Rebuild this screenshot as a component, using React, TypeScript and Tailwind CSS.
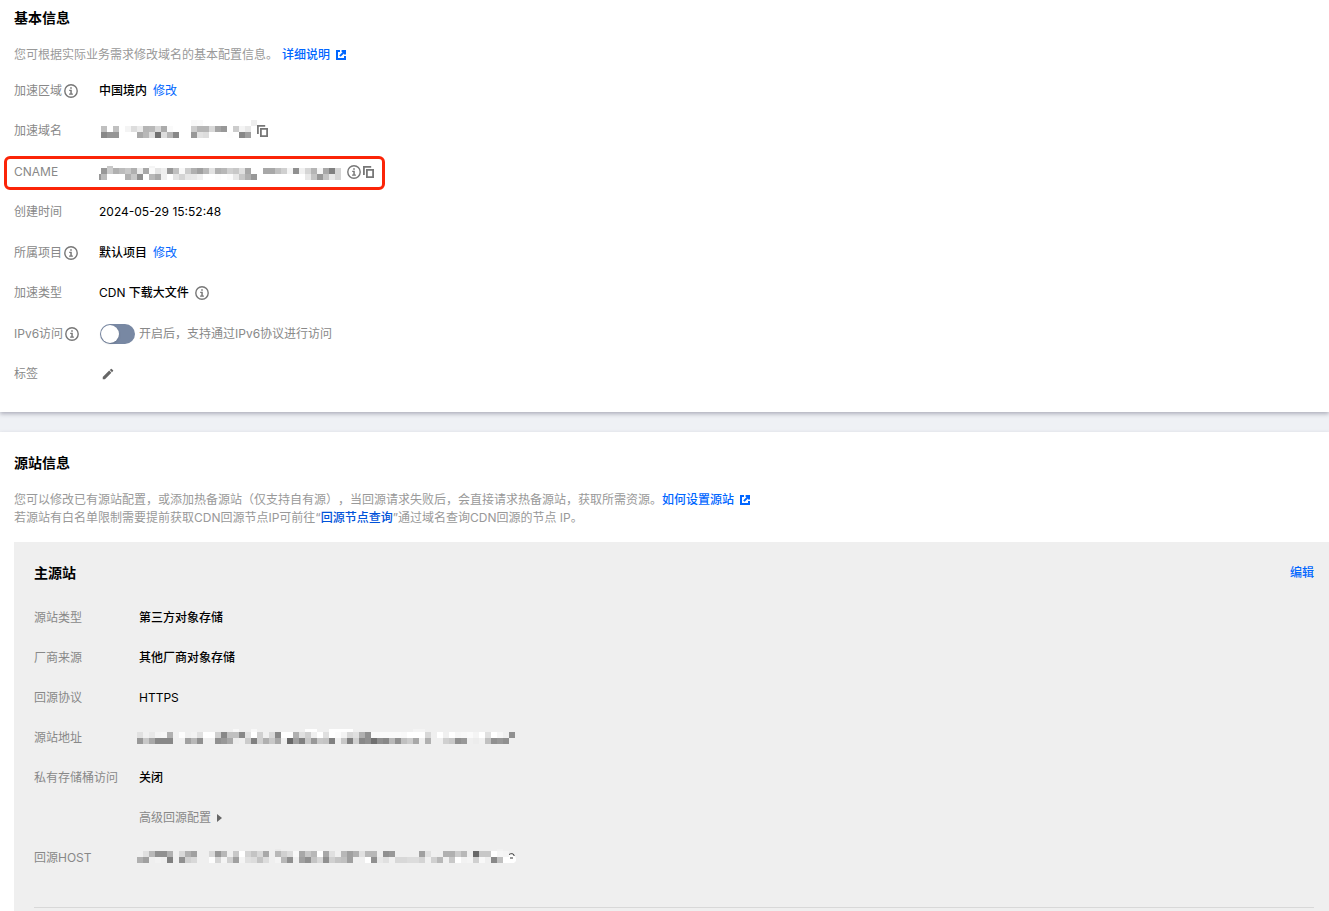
import type { ReactNode } from 'react';
import { MdEdit } from 'react-icons/md';

// Masked values: every pair of characters is one grey cell, ".." is an empty one
const DOMAIN_MASK = [
  '..............................f8fa................ee',
  'c0..c0..f4ddebb5b8d8abfa......ccb5b5d8a598..ccf4e8..',
  '889595......a8b8dd70ddb588....98e2dd......fd..88a0..',
];

const CNAME_MASK = [
  '....c8............f5..............................................................',
  '..98ccb0bcc8b0eca8fae4ee98c0f8ccb0a0b8e2b0b8d0c8e0a8....a8a8c0d0f590f0d5b5f5a880d5',
  '98bc......b0c890..b8a8f0..e4d4e6e8f0....fc..fbe8c8b098................e8c498c4e8d5',
];

const ORIGIN_MASK = [
  '................................f8....f8................ffff....ffffffff....................f4f4..............................',
  'e0f0e8f4f6b0f0fd..f2e0ffffd088c0c088e2ffd0f0d888ffffb0e0d0f0ffe0fffcf4d8e0b090fafafafafaf8ffffffd8..fff0fff6f8faf4ffe0fff6..90',
  '98c8a8888888....a0b890....9098a8ec..cc80d0b0c8a8f068a080c898c8c480..c880d08890709088b890c0cca8..b0....d0c89098..ecf0c0909890..',
];

const HOST_MASK = [
  '..............................................ea........................................................................f2..',
  'f0e0b89090b0..d8b0a0....d898b8..c8ffd4c4d8a8..b8d0dcf8a8c8b8ffa8e0f0b8a0b0e0b8b8..9098........a0e0f0..b0b0ccb8..68c8c8fff6f4',
  'b0a0..f2..80..90d0d8....fdd4f4d0a0f4e0dcc4dc..f4b890..a090c4d890d0c4c0a0f0..ff90e8e0f0d8d8dcdcd4f0d0b8f0c8fff2f4d0f8..88c0ff',
];

interface MosaicProps {
  rows: string[];
  label: string;
  clipX?: number;
  clipY?: number;
  className?: string;
}

function Mosaic({ rows, label, clipX = 0, clipY = 0, className = 'mb-1 shrink-0' }: MosaicProps) {
  const width = (rows[0].length / 2) * 6 - clipX;
  const height = rows.length * 6 - clipY;
  return (
    <svg
      role="img"
      aria-label={label}
      width={width}
      height={height}
      viewBox={`${clipX} ${clipY} ${width} ${height}`}
      shapeRendering="crispEdges"
      className={className}
    >
      {rows.map((row, y) =>
        (row.match(/../g) ?? []).map((cell, x) =>
          cell === '..' ? null : (
            <rect key={`${x}-${y}`} x={x * 6} y={y * 6} width="6" height="6" fill={`#${cell}${cell}${cell}`} />
          )
        )
      )}
    </svg>
  );
}

function InfoIcon() {
  return (
    <svg width="14" height="14" viewBox="0 0 14 14" fill="none" className="shrink-0 text-[#777777]">
      <circle cx="7" cy="7" r="6.2" stroke="currentColor" strokeWidth="1.4" />
      <path d="M6.2 3.2h1.6v1.5H6.2zM5.2 5.7h2.6v3.9h1.1v1.2H5.1V9.6h1.2V6.9H5.2z" fill="currentColor" />
    </svg>
  );
}

function ExternalIcon() {
  return (
    <svg width="10" height="10" viewBox="0 0 10 10" fill="none" stroke="currentColor" className="shrink-0">
      <path d="M4 1H1v8h8V6" strokeWidth="2" />
      <path d="M5.6 1H9v3.4M8.8 1.2 3.9 6.1" strokeWidth="2" />
    </svg>
  );
}

function CopyButton({ label }: { label: string }) {
  return (
    <button type="button" aria-label={label} className="shrink-0 text-[#777777]">
      <svg width="11" height="12" viewBox="0 0 11 12" fill="none" stroke="currentColor" strokeWidth="1.8" className="block">
        <path d="M.9 9V.9h7.3" />
        <path d="M3.9 3.9h6.2v7.2H3.9z" />
      </svg>
    </button>
  );
}

function InfoRow({ label, info, tall, children }: { label: string; info?: boolean; tall?: boolean; children: ReactNode }) {
  return (
    <div className={tall ? 'relative flex h-[41px] items-center' : 'relative flex h-10 items-center'}>
      <dt className="flex w-[85px] shrink-0 items-center gap-0.5 text-[#888888]">
        {label}
        {info && <InfoIcon />}
      </dt>
      <dd className="flex items-center">{children}</dd>
    </div>
  );
}

function OriginRow({ label, children }: { label?: string; children: ReactNode }) {
  return (
    <div className="flex h-10 items-center">
      <dt className="w-[103px] shrink-0 text-[#888888]">{label}</dt>
      <dd className="flex items-center">{children}</dd>
    </div>
  );
}

export default function App() {
  return (
    <div className="flex min-h-screen flex-col gap-5 bg-[#eff1f5] font-['Inter','Noto_Sans_CJK_SC',sans-serif] text-[12px] leading-[18px] text-black [text-spacing-trim:space-all]">
      {/* Basic information */}
      <section className="bg-white px-3.5 pt-2 pb-[18px] shadow-[0_2px_4px_rgba(54,54,80,0.34)]">
        <h2 className="text-[14px] leading-5 font-bold">基本信息</h2>
        <p className="mt-[18px] flex items-center text-[#999999]">
          您可根据实际业务需求修改域名的基本配置信息。
          <a href="#detail" className="ml-1 flex items-center gap-1.5 font-medium text-[#0066ff]">
            详细说明
            <ExternalIcon />
          </a>
        </p>

        <dl className="mt-1.5">
          <InfoRow label="加速区域" info tall>
            <span className="font-medium">中国境内</span>
            <button type="button" className="ml-1.5 text-[#0066ff]">修改</button>
          </InfoRow>
          <InfoRow label="加速域名">
            <span className="flex items-center pl-0.5">
              <Mosaic rows={DOMAIN_MASK} label="加速域名" />
              <CopyButton label="复制域名" />
            </span>
          </InfoRow>
          <InfoRow label="CNAME" tall>
            <Mosaic rows={CNAME_MASK} clipX={4} clipY={4} label="CNAME" className="mt-0.5 shrink-0" />
            <span className="ml-1.5 flex items-center gap-0.5">
              <InfoIcon />
              <CopyButton label="复制 CNAME" />
            </span>
            <span className="pointer-events-none absolute top-[5px] -left-2.5 h-[34px] w-[381px] rounded-md border-3 border-[#fb2407]" />
          </InfoRow>
          <InfoRow label="创建时间">
            <span>2024-05-29 15:52:48</span>
          </InfoRow>
          <InfoRow label="所属项目" info tall>
            <span className="font-medium">默认项目</span>
            <button type="button" className="ml-1.5 text-[#0066ff]">修改</button>
          </InfoRow>
          <InfoRow label="加速类型">
            <span className="mr-1.5">
              CDN <span className="font-medium">下载大文件</span>
            </span>
            <InfoIcon />
          </InfoRow>
          <InfoRow label="IPv6访问" info tall>
            <label className="flex items-center gap-1 text-[#888888]">
              <input
                type="checkbox"
                role="switch"
                className="ml-px h-5 w-[35px] appearance-none rounded-full bg-[#7888a3] before:m-px before:block before:size-[18px] before:rounded-full before:bg-white before:shadow-sm checked:bg-[#0066ff] checked:before:ml-4"
              />
              开启后，支持通过IPv6协议进行访问
            </label>
          </InfoRow>
          <InfoRow label="标签">
            <button type="button" aria-label="编辑标签" className="ml-0.5 text-[#666666]">
              <MdEdit className="size-3.5" />
            </button>
          </InfoRow>
        </dl>
      </section>

      {/* Origin information */}
      <section className="flex flex-1 flex-col bg-white pt-[21px] pl-3.5 shadow-[0_2px_4px_rgba(54,54,80,0.34)]">
        <h2 className="text-[14px] leading-5 font-bold">源站信息</h2>
        <div className="mt-[18px] text-[#999999]">
          <p className="flex items-center">
            您可以修改已有源站配置，或添加热备源站（仅支持自有源），当回源请求失败后，会直接请求热备源站，获取所需资源。
            <a href="#origin" className="flex items-center gap-1.5 font-medium text-[#0066ff]">
              如何设置源站
              <ExternalIcon />
            </a>
          </p>
          <p>
            若源站有白名单限制需要提前获取CDN回源节点IP可前往“
            <a href="#nodes" className="font-medium text-[#0052d9]">回源节点查询</a>
            ”通过域名查询CDN回源的节点 IP。
          </p>
        </div>

        <div className="mt-[15px] flex-1 bg-[#efefef] pt-[21px] pr-[15px] pl-5">
          <div className="flex items-center justify-between">
            <h3 className="text-[14px] leading-5 font-bold">主源站</h3>
            <button type="button" className="font-medium text-[#0066ff]">编辑</button>
          </div>
          <dl className="mt-[15px] border-b border-[#d8d8d8] pb-[29px]">
            <OriginRow label="源站类型">
              <span className="pl-0.5 font-medium">第三方对象存储</span>
            </OriginRow>
            <OriginRow label="厂商来源">
              <span className="pl-0.5 font-medium">其他厂商对象存储</span>
            </OriginRow>
            <OriginRow label="回源协议">
              <span className="pl-0.5">HTTPS</span>
            </OriginRow>
            <OriginRow label="源站地址">
              <Mosaic rows={ORIGIN_MASK} clipY={3} label="源站地址" />
            </OriginRow>
            <OriginRow label="私有存储桶访问">
              <span className="pl-0.5 font-medium">关闭</span>
            </OriginRow>
            <OriginRow>
              <button type="button" className="flex items-center gap-1.5 pl-0.5 text-[#888888]">
                高级回源配置
                <svg width="5" height="8" viewBox="0 0 5 8" fill="#666666">
                  <path d="M0 0l5 4-5 4z" />
                </svg>
              </button>
            </OriginRow>
            <OriginRow label="回源HOST">
              <Mosaic rows={HOST_MASK} clipY={4} label="回源HOST" />
              <svg width="8" height="14" viewBox="0 0 8 14" fill="none" className="mb-1">
                <path d="M0 5h4l3 4v3l-2 2H0z" fill="#ffffff" />
                <path d="M0 5.5c2-1.3 4-.9 5 .3v1.2M1 9h3" stroke="#333333" strokeWidth="1" />
              </svg>
            </OriginRow>
          </dl>
        </div>
      </section>
    </div>
  );
}
